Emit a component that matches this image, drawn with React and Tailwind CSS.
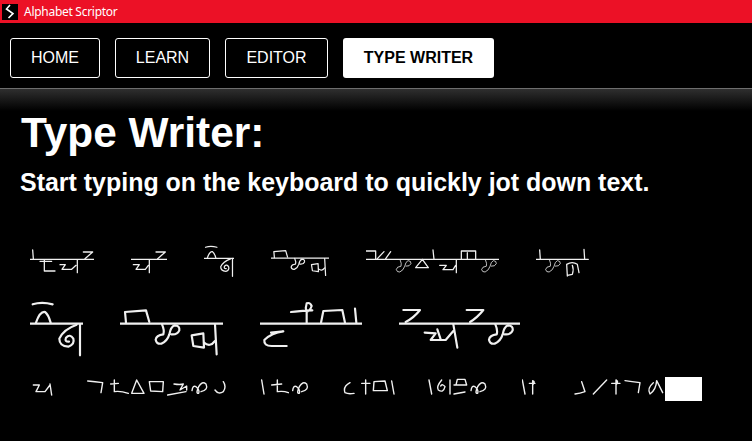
const tau = (dx = 0, dy = 0, s = 1) => (
  <path
    transform={`translate(${dx} ${dy}) scale(${s})`}
    d="M22 0Q30 18 26 30Q5 32 3 46Q6 60 20 58Q38 50 44 30Q48 8 60 3Q76 4 74 18Q68 32 50 30"
  />
);

const loop = (dx, dy = 32) => (
  <path
    transform={`translate(${dx} ${dy})`}
    d="M3 30Q5 13 15 18Q27 28 23 38Q13 40 23 18Q33 0 45 10Q53 28 30 33"
  />
);

const rowOneSeven = (x) => <path d={`M${x} 48H${x + 28}L${x + 5} 68`} />;

const Word = ({ ox, oy, x, y, w, h, sw = 3.8, color = "#f0f0f0", children, vb }) => (
  <svg
    width={w}
    height={h}
    viewBox={vb || `${(x - ox) * 3} ${(y - oy) * 3} ${w * 3} ${h * 3}`}
    fill="none"
    stroke={color}
    strokeWidth={sw}
    strokeLinecap="round"
    strokeLinejoin="round"
    className="block shrink-0"
  >
    {children}
  </svg>
);

const BigOne = () => (
  <>
    <path d="M30 83H188" />
    <path d="M38 25Q65 16 98 25" />
    <path d="M48 80Q60 45 75 48Q85 55 92 80" />
    <path d="M180 84V178" />
    <path d="M170 86Q130 100 118 128Q118 150 145 152Q165 145 160 128Q150 112 138 125Q133 138 147 137" />
  </>
);

const BigTwo = () => (
  <>
    <path d="M300 83H608" />
    <path d="M318 80L315 48L378 43L388 78" />
    {tau(404, 85, 1)}
    <path d="M515 118L550 112L552 155L520 150Z" />
    <path d="M552 140Q570 155 585 135" />
    <path d="M585 85L590 175" />
  </>
);

function App() {
  return (
    <div className="min-h-screen w-full bg-black text-white font-['Liberation_Sans',Arial,sans-serif] overflow-hidden">
      <div className="h-[23px] bg-[#ec1126] flex items-center">
        <svg width="16" height="16" viewBox="0 0 16 16" className="ml-[2px] mt-[1px] block">
          <rect width="16" height="16" fill="#000" />
          <path d="M8 1L4.5 5L11 9.5L6.5 14" stroke="#fff" strokeWidth="1.6" fill="none" />
        </svg>
        <span className="ml-[6px] text-[12px] tracking-[-0.28px] font-['Noto_Sans',sans-serif] text-white">Alphabet Scriptor</span>
      </div>

      <nav className="h-[65px] flex items-start pt-[15px] pl-[10px]">
        <button className="h-[40px] w-[90px] border border-white rounded-[3px] text-[16px]">HOME</button>
        <button className="h-[40px] w-[95px] ml-[15px] border border-white rounded-[3px] text-[16px]">LEARN</button>
        <button className="h-[40px] w-[103px] ml-[15px] border border-white rounded-[3px] text-[16px]">EDITOR</button>
        <button className="h-[40px] w-[151px] ml-[15px] bg-white text-black font-bold rounded-[3px] text-[16px]">TYPE WRITER</button>
      </nav>

      <main className="border-t border-[#6e6e6e] bg-[linear-gradient(#2f2f2f,#000_22px)] pt-[20px] h-[353px]">
        <h1 className="pl-[21px] text-[42.4px] leading-[48px] font-bold">Type Writer:</h1>
        <p className="pl-[20px] mt-[11px] text-[24.96px] leading-[28px] font-bold">Start typing on the keyboard to quickly jot down text.</p>

        <div className="mt-[45px] pl-[30px] flex gap-[37px]">
          <Word ox={20} oy={235} x={30} y={240} w={64} h={45}>
            <path d="M30 70H222M38 42L40 68" />
            {rowOneSeven(190)}
            <path d="M60 76H95M73 72V105H105M120 86H136L126 100H155L168 88M172 72V110" />
          </Word>
          <Word ox={20} oy={235} x={131} y={240} w={36} h={45}>
            <path d="M333 70H440" />
            {rowOneSeven(408)}
            <path d="M340 86H358L348 100H376L385 88M388 72V110" />
          </Word>
          <Word w={30} h={45} sw={6.5} vb="30 -8 158 237"><BigOne /></Word>
          <Word w={58} h={45} sw={6.5} vb="300 -8 308 239"><BigTwo /></Word>
          <Word ox={340} oy={235} x={367} y={240} w={133} h={45}>
            <path d="M81 70H480M81 45H110V68M115 68L135 47M140 68L155 47" />
            {tau(170, 72, 0.62)}
            <path d="M230 95L250 70L268 95ZM282 42L285 70M302 88H322L312 101H342L350 88M352 72V110M367 68V45H410V68M385 50V68" />
            {tau(426, 72, 0.62)}
          </Word>
          <Word ox={340} oy={235} x={537} y={240} w={53} h={45}>
            <path d="M590 70H748M602 42L604 70M735 40L737 70" />
            {tau(618, 72, 0.62)}
            <path d="M685 120L683 85Q700 75 715 85L720 110M685 118L700 115Q705 100 700 88" />
          </Word>
        </div>

        <div className="mt-[10px] pl-[30px] flex gap-[37px]">
          <Word ox={20} oy={295} x={30} y={295} w={53} h={65} sw={6.5}><BigOne /></Word>
          <Word ox={20} oy={295} x={120} y={295} w={103} h={65} sw={6.5}><BigTwo /></Word>
          <Word ox={255} oy={295} x={260} y={295} w={102} h={65} sw={6.5}>
            <path d="M15 83H320" />
            <path d="M48 110L85 106Q50 110 28 132Q26 150 50 150H95" />
            <path d="M108 48Q130 45 172 43M155 80V48Q150 35 155 22Q165 18 170 30Q165 45 155 48" />
            <path d="M198 80L205 45L262 42L270 80M300 38L304 80" />
          </Word>
          <Word ox={255} oy={295} x={400} y={295} w={121} h={65} sw={6.5}>
            <path d="M435 83H798" />
            <path d="M448 42H498Q480 65 455 78M638 42H688Q670 65 648 78" />
            <path d="M512 110L545 112L530 132H575L598 105M550 100L560 130M598 85L610 155" />
            {tau(702, 85, 1)}
          </Word>
        </div>

        <div className="mt-[11px] pl-[32px] flex gap-[33px]">
          <Word ox={20} oy={370} x={32} y={372} w={22} h={35} sw={4.2}>
            <path d="M40 45H58L48 65H75L90 45M90 42L95 75" />
          </Word>
          <Word ox={20} oy={370} x={87} y={372} w={140} h={35} sw={4.2}>
            <path d="M203 33Q225 35 248 38L243 68M283 30V65Q300 62 325 70M272 42L295 40" />
            <path d="M335 70L350 30L372 70ZM388 35H430L428 65L392 63Z" />
            <path d="M462 42Q480 45 490 42L480 60L500 48V60M443 75L498 65" />
            {loop(513)}
            <path d="M585 60Q595 75 610 65Q620 50 610 35" />
          </Word>
          <Word ox={250} oy={370} x={260} y={372} w={49} h={35} sw={4.2}>
            <path d="M35 30L42 72M82 30V65Q100 62 115 68M65 45L95 42" />
            {loop(125)}
          </Word>
          <Word ox={250} oy={370} x={342} y={372} w={53} h={35} sw={4.2}>
            <path d="M300 38Q278 50 285 68Q295 73 312 70M335 40H360M347 30V72" />
            <path d="M370 62L372 35L405 33L412 62ZM425 33L432 72" />
          </Word>
          <Word ox={250} oy={370} x={428} y={372} w={61} h={35} sw={4.2}>
            <path d="M537 30L545 72M575 30Q558 50 565 60Q580 70 585 50Q578 40 572 48M600 30V72" />
            <path d="M618 45L622 28H645L650 45H612M612 72L645 66" />
            {loop(660)}
          </Word>
          <Word ox={490} oy={370} x={522} y={372} w={17} h={35} sw={4.2}>
            <path d="M97 30L105 72M118 40H135M128 72V32Q136 34 130 42" />
          </Word>
          <div className="flex items-start">
            <Word ox={490} oy={370} x={572} y={372} w={93} h={35} sw={4.2}>
              <path d="M255 72Q270 70 285 65L275 35M310 72L350 30M365 40H390M378 72V30Q386 34 380 42" />
              <path d="M405 32Q425 35 450 38L445 68M490 38Q470 55 480 72Q498 60 500 32L518 68" />
            </Word>
            <div className="w-[37px] h-[24px] mt-[5px] bg-white" />
          </div>
        </div>
      </main>
    </div>
  );
}

export default App;
